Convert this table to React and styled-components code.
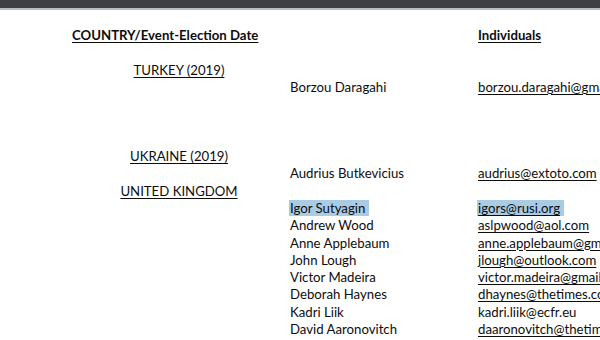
import styled, { createGlobalStyle } from "styled-components";

const GlobalStyle = createGlobalStyle`
  html, body {
    margin: 0;
    padding: 0;
    background: #fff;
  }
  body {
    font-family: Lato, "Liberation Sans", sans-serif;
    color: #0d0d0d;
  }
`;

const Page = styled.div`
  width: 600px;
  height: 340px;
  overflow: hidden;
  background: #fff;
`;

const Toolbar = styled.div`
  height: 8px;
  background: #3d4043;
  border-bottom: 2px solid #b9bbbd;
`;

const Sheet = styled.div`
  display: grid;
  grid-template-columns: 218px 188px 1fr;
  grid-auto-rows: 17.3px;
  padding: 17px 0 0 72px;
  font-size: 13.2px;
  line-height: 17.3px;
  white-space: nowrap;
`;

const Cell = styled.div`
  text-align: ${(p) => (p.center ? "center" : "left")};
  padding-right: ${(p) => (p.center ? "4px" : "0")};
  font-weight: ${(p) => (p.bold ? 700 : 400)};
`;

const Text = styled.span`
  text-decoration: ${(p) => (p.link ? "underline" : "none")};
  text-underline-offset: 2px;
  text-decoration-thickness: 1px;
  background: ${(p) => (p.marked ? "#a9cbe4" : "transparent")};
  padding: ${(p) => (p.marked ? "0 4px 0 1px" : "0")};
  margin-left: ${(p) => (p.marked ? "-1px" : "0")};
`;

const rows = [
  { country: "COUNTRY/Event-Election Date", email: "Individuals", head: true },
  {},
  { country: "TURKEY (2019)" },
  { name: "Borzou Daragahi", email: "borzou.daragahi@gmail.com" },
  {},
  {},
  {},
  { country: "UKRAINE (2019)" },
  { name: "Audrius Butkevicius", email: "audrius@extoto.com" },
  { country: "UNITED KINGDOM" },
  { name: "Igor Sutyagin", email: "igors@rusi.org", marked: true },
  { name: "Andrew Wood", email: "aslpwood@aol.com" },
  { name: "Anne Applebaum", email: "anne.applebaum@gmail.com" },
  { name: "John Lough", email: "jlough@outlook.com" },
  { name: "Victor Madeira", email: "victor.madeira@gmail.com" },
  { name: "Deborah Haynes", email: "dhaynes@thetimes.co.uk" },
  { name: "Kadri Liik", email: "kadri.liik@ecfr.eu", plain: true },
  { name: "David Aaronovitch", email: "daaronovitch@thetimes.co.uk" },
];

export default function App() {
  return (
    <Page>
      <GlobalStyle />
      <Toolbar />
      <Sheet>
        {rows.map((r, i) => [
          <Cell key={`c${i}`} center={!r.head} bold={r.head}>
            {r.country && <Text link>{r.country}</Text>}
          </Cell>,
          <Cell key={`n${i}`}>
            {r.name && <Text marked={r.marked}>{r.name}</Text>}
          </Cell>,
          <Cell key={`e${i}`} bold={r.head}>
            {r.email && (
              <Text link={!r.plain} marked={r.marked}>
                {r.email}
              </Text>
            )}
          </Cell>,
        ])}
      </Sheet>
    </Page>
  );
}
